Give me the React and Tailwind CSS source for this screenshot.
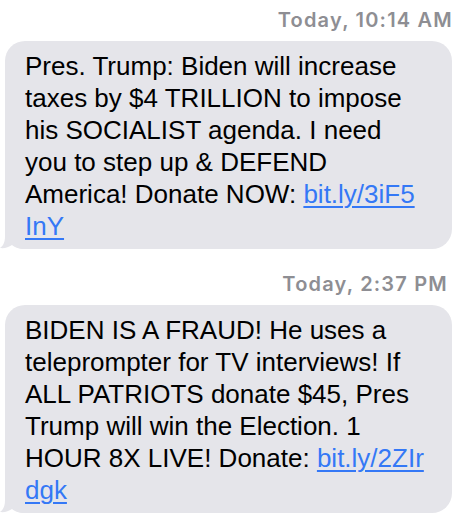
const font = { fontFamily: '"Liberation Sans", Arial, sans-serif' };

function Tail() {
  return (
    <svg className="absolute left-[-5px] bottom-0" width="25" height="25" viewBox="0 0 25 25">
      <path d="M5 0 L5 12 C5 18 3.5 21.5 0 24 C4.5 24.6 8.5 23.4 12 21 C15.5 23.8 19 25 25 25 L25 0 Z" fill="#e5e5ea" />
    </svg>
  );
}

function Stamp({ day, time, className }) {
  return (
    <div
      className={`text-right text-[20px] leading-[24px] font-semibold tracking-[1.2px] text-[#8e8e93] ${className}`}
      style={{ fontFamily: 'Inter, "Liberation Sans", sans-serif' }}
    >
      {day}, {time}
    </div>
  );
}

function Link({ children }) {
  return <span className="text-[#3478f6] underline underline-offset-[3px] decoration-[1.5px]">{children}</span>;
}

function Bubble({ children }) {
  return (
    <div className="relative ml-[5px] w-[447px] bg-[#e5e5ea] rounded-[20px] pl-[20px] pr-[10px] pt-[9px] pb-[7px] text-[26px] leading-[32px] text-black whitespace-nowrap">
      <Tail />
      <div className="relative">{children}</div>
    </div>
  );
}

export default function App() {
  return (
    <div className="w-[468px] h-[530px] bg-white overflow-hidden" style={font}>
      <Stamp day="Today" time="10:14 AM" className="pt-[8px] pr-[15px] mb-[9px]" />
      <Bubble>
        Pres. Trump: Biden will increase<br />
        taxes by $4 TRILLION to impose<br />
        his SOCIALIST agenda. I need<br />
        you to step up &amp; DEFEND<br />
        America! Donate NOW: <Link>bit.ly/3iF5</Link><br />
        <Link>InY</Link>
      </Bubble>
      <Stamp day="Today" time="2:37 PM" className="mt-[23px] pr-[20px] mb-[9px]" />
      <Bubble>
        BIDEN IS A FRAUD! He uses a<br />
        teleprompter for TV interviews! If<br />
        ALL PATRIOTS donate $45, Pres<br />
        Trump will win the Election. 1<br />
        HOUR 8X LIVE! Donate: <Link>bit.ly/2ZIr</Link><br />
        <Link>dgk</Link>
      </Bubble>
    </div>
  );
}
